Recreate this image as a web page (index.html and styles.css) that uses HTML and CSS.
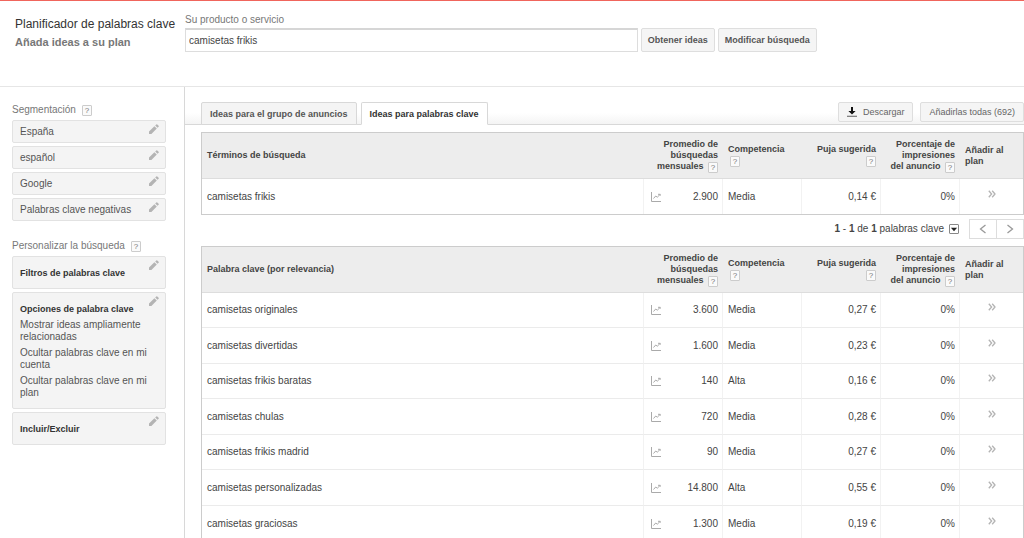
FILE: index.html
```html
<!DOCTYPE html>
<html lang="es">
<head>
<meta charset="utf-8">
<title>Planificador de palabras clave</title>
<link rel="stylesheet" href="styles.css">
</head>
<body>
<svg class="sprite" aria-hidden="true">
  <symbol id="pencil" viewBox="0 0 10 10"><path d="M0 10V7.6L5.4 2.2l2.4 2.4L2.4 10zM6.2 1.5l1.1-1.1q.5-.5 1 0l1.3 1.3q.5.5 0 1L8.5 3.8z"/></symbol>
  <symbol id="chart" viewBox="0 0 10 10"><path d="M.5 0v9.5H10M2.500 6.500L4.700 4l1.600 1.200L9 2.500M7 2.300h2.300v1.400" fill="none" stroke="currentColor"/></symbol>
  <symbol id="chevrons" viewBox="0 0 8 8"><path d="M.8.8L3.6 4 .8 7.2M4.2.8L7 4 4.2 7.2" fill="none" stroke="currentColor" stroke-width="1.3"/></symbol>
</svg>
<header class="top">
  <div class="heading">
    <h1>Planificador de palabras clave</h1>
    <p>Añada ideas a su plan</p>
  </div>
  <form class="search">
    <label for="product">Su producto o servicio</label>
    <div class="search-row">
      <input id="product" type="text" value="camisetas frikis">
      <button class="btn strong" type="button">Obtener ideas</button>
      <button class="btn strong" type="button">Modificar búsqueda</button>
    </div>
  </form>
</header>
<div class="body">
  <aside class="side">
    <h2>Segmentación <button class="help" type="button">?</button></h2>
    <div class="stack">
      <section class="box"><span>España</span><button class="edit" type="button" aria-label="Editar"><svg><use href="#pencil"/></svg></button></section>
      <section class="box"><span>español</span><button class="edit" type="button" aria-label="Editar"><svg><use href="#pencil"/></svg></button></section>
      <section class="box"><span>Google</span><button class="edit" type="button" aria-label="Editar"><svg><use href="#pencil"/></svg></button></section>
      <section class="box"><span>Palabras clave negativas</span><button class="edit" type="button" aria-label="Editar"><svg><use href="#pencil"/></svg></button></section>
    </div>
    <h2>Personalizar la búsqueda <button class="help" type="button">?</button></h2>
    <div class="stack">
      <section class="box tall"><h3>Filtros de palabras clave</h3><button class="edit" type="button" aria-label="Editar"><svg><use href="#pencil"/></svg></button></section>
      <section class="box tall">
        <div>
          <h3>Opciones de palabra clave</h3>
          <ul>
            <li>Mostrar ideas ampliamente relacionadas</li>
            <li>Ocultar palabras clave en mi cuenta</li>
            <li>Ocultar palabras clave en mi plan</li>
          </ul>
        </div>
        <button class="edit" type="button" aria-label="Editar"><svg><use href="#pencil"/></svg></button>
      </section>
      <section class="box tall"><h3>Incluir/Excluir</h3><button class="edit" type="button" aria-label="Editar"><svg><use href="#pencil"/></svg></button></section>
    </div>
  </aside>
  <main class="main">
    <div class="bar">
      <nav class="tabs">
        <button class="tab" type="button">Ideas para el grupo de anuncios</button>
        <button class="tab active" type="button">Ideas para palabras clave</button>
      </nav>
      <div class="actions">
        <button class="btn" type="button"><svg class="download" viewBox="0 0 10 10"><path d="M4 0h2v4h2.600L5 7.600 1.400 4H4z" fill="#111"/><path d="M0 9.300h10" stroke="#777" stroke-width="1.200"/></svg>Descargar</button>
        <button class="btn" type="button">Añadirlas todas (692)</button>
      </div>
    </div>
    <div class="results">
      <table class="grid">
        <thead>
          <tr><th class="term">Términos de búsqueda</th><th class="num icon-col"></th><th class="num vol-col"><div class="wide">Promedio de búsquedas mensuales <button class="help" type="button">?</button></div></th><th class="comp">Competencia <button class="help" type="button">?</button></th><th class="num bid">Puja sugerida <button class="help" type="button">?</button></th><th class="num share">Porcentaje de impresiones del&nbsp;anuncio <button class="help" type="button">?</button></th><th class="add">Añadir al plan</th></tr>
        </thead>
        <tbody>
          <tr><td>camisetas frikis</td><td class="trend"><svg><use href="#chart"/></svg></td><td class="num vol">2.900</td><td>Media</td><td class="num">0,14 €</td><td class="num">0%</td><td class="plus"><button type="button" aria-label="Añadir al plan"><svg><use href="#chevrons"/></svg></button></td></tr>
        </tbody>
      </table>
      <div class="pager">
        <span><b>1</b> - <b>1</b> de <b>1</b> palabras clave</span>
        <button class="drop" type="button" aria-label="Filas por página"><svg viewBox="0 0 9 9"><path d="M1 3h7L4.500 7z"/></svg></button>
        <div class="pages">
          <button type="button" aria-label="Anterior"><svg viewBox="0 0 8 10"><path d="M6.500 1L1.500 5l5 4"/></svg></button>
          <button type="button" aria-label="Siguiente"><svg viewBox="0 0 8 10"><path d="M1.500 1l5 4-5 4"/></svg></button>
        </div>
      </div>
      <table class="grid list">
        <thead>
          <tr><th class="term">Palabra clave (por relevancia)</th><th class="num icon-col"></th><th class="num vol-col"><div class="wide">Promedio de búsquedas mensuales <button class="help" type="button">?</button></div></th><th class="comp">Competencia <button class="help" type="button">?</button></th><th class="num bid">Puja sugerida <button class="help" type="button">?</button></th><th class="num share">Porcentaje de impresiones del&nbsp;anuncio <button class="help" type="button">?</button></th><th class="add">Añadir al plan</th></tr>
        </thead>
        <tbody>
          <tr><td>camisetas originales</td><td class="trend"><svg><use href="#chart"/></svg></td><td class="num vol">3.600</td><td>Media</td><td class="num">0,27 €</td><td class="num">0%</td><td class="plus"><button type="button" aria-label="Añadir al plan"><svg><use href="#chevrons"/></svg></button></td></tr>
          <tr><td>camisetas divertidas</td><td class="trend"><svg><use href="#chart"/></svg></td><td class="num vol">1.600</td><td>Media</td><td class="num">0,23 €</td><td class="num">0%</td><td class="plus"><button type="button" aria-label="Añadir al plan"><svg><use href="#chevrons"/></svg></button></td></tr>
          <tr><td>camisetas frikis baratas</td><td class="trend"><svg><use href="#chart"/></svg></td><td class="num vol">140</td><td>Alta</td><td class="num">0,16 €</td><td class="num">0%</td><td class="plus"><button type="button" aria-label="Añadir al plan"><svg><use href="#chevrons"/></svg></button></td></tr>
          <tr><td>camisetas chulas</td><td class="trend"><svg><use href="#chart"/></svg></td><td class="num vol">720</td><td>Media</td><td class="num">0,28 €</td><td class="num">0%</td><td class="plus"><button type="button" aria-label="Añadir al plan"><svg><use href="#chevrons"/></svg></button></td></tr>
          <tr><td>camisetas frikis madrid</td><td class="trend"><svg><use href="#chart"/></svg></td><td class="num vol">90</td><td>Media</td><td class="num">0,27 €</td><td class="num">0%</td><td class="plus"><button type="button" aria-label="Añadir al plan"><svg><use href="#chevrons"/></svg></button></td></tr>
          <tr><td>camisetas personalizadas</td><td class="trend"><svg><use href="#chart"/></svg></td><td class="num vol">14.800</td><td>Alta</td><td class="num">0,55 €</td><td class="num">0%</td><td class="plus"><button type="button" aria-label="Añadir al plan"><svg><use href="#chevrons"/></svg></button></td></tr>
          <tr><td>camisetas graciosas</td><td class="trend"><svg><use href="#chart"/></svg></td><td class="num vol">1.300</td><td>Media</td><td class="num">0,19 €</td><td class="num">0%</td><td class="plus"><button type="button" aria-label="Añadir al plan"><svg><use href="#chevrons"/></svg></button></td></tr>
        </tbody>
      </table>
    </div>
  </main>
</div>
</body>
</html>
```
FILE: styles.css
```css
* { box-sizing: border-box; }
body {
  margin: 0;
  min-height: 100vh;
  display: flex;
  flex-direction: column;
  border-top: 1px solid #f0655c;
  background: #fff;
  color: #444;
  font: 10px/12px "Liberation Sans", Arial, sans-serif;
}
h1, h2, h3, p, ul { margin: 0; padding: 0; font: inherit; }
ul { list-style: none; }
button { font: inherit; color: inherit; cursor: pointer; }
svg { display: block; fill: currentColor; }
.sprite { position: absolute; width: 0; height: 0; }

.top {
  display: flex;
  height: 86px;
  padding: 12px 16px 0 15px;
  border-bottom: 1px solid #e6e6e6;
}
.heading { width: 170px; flex: none; }
.heading h1 { color: #333; font-size: 12px; line-height: 22px; white-space: nowrap; }
.heading p { color: #777; font-size: 11px; line-height: 14px; font-weight: bold; }
.search label { display: block; color: #777; line-height: 14px; }
.search { flex: 1; }
.search-row { display: flex; gap: 3px; padding-top: 1px; }
.search-row input {
  width: 55%;
  height: 24px;
  padding: 0 3px;
  border: 1px solid #ddd;
  border-top: 2px solid #d6d6d6;
  color: #444;
  font: inherit;
}
.btn {
  display: flex;
  align-items: center;
  padding: 0 8px;
  border: 1px solid #dedede;
  border-radius: 2px;
  background: #f5f5f5;
  color: #666;
  font-size: 9px;
  white-space: nowrap;
}
.btn.strong { height: 24px; padding: 0 6px; color: #555; font-weight: bold; }

.body { display: flex; flex: 1; }
.side {
  width: 185px;
  flex: none;
  padding: 16px 18px 0 12px;
  border-right: 1px solid #d8d8d8;
}
.side h2 { display: flex; align-items: center; gap: 6px; height: 14px; color: #777; }
.stack { display: grid; gap: 3px; padding: 3px 0 18px; }
.box {
  display: flex;
  justify-content: space-between;
  align-items: flex-start;
  padding: 5px 6px 4px 7px;
  border: 1px solid #e2e2e2;
  border-radius: 2px;
  background: #f4f4f4;
  color: #555;
}
.box.tall { padding: 10px 6px 9px 7px; }
.box > :first-child { flex: 1; }
.box h3 { color: #333; font-weight: bold; font-size: 9px; white-space: nowrap; }
.box li { margin-top: 4px; margin-right: -12px; }
.edit { padding: 0; border: 0; background: none; color: #b4b4b4; }
.box .edit { margin-top: -2px; }
.box.tall .edit { margin-top: -7px; }
.edit svg { width: 10px; height: 10px; }
.help {
  display: inline-block;
  width: 10px;
  height: 11px;
  padding: 0;
  border: 1px solid #ccc;
  border-radius: 1px;
  background: #fafafa;
  color: #777;
  font: 8px/9px "Liberation Sans", Arial, sans-serif;
}

.main { flex: 1; min-width: 0; }
.bar {
  display: flex;
  justify-content: space-between;
  align-items: flex-end;
  height: 38px;
  padding-left: 16px;
  border-bottom: 1px solid #d8d8d8;
  background: linear-gradient(#fff 70%, #f4f4f4);
}
.tabs { display: flex; gap: 4px; margin-bottom: -1px; }
.tab {
  height: 23px;
  padding: 0 8px;
  border: 1px solid #d8d8d8;
  border-radius: 2px 2px 0 0;
  background: #f4f4f4;
  color: #555;
  font-size: 9px;
  font-weight: bold;
  white-space: nowrap;
}
.tab.active { border-bottom-color: #fff; background: #fff; color: #333; }
.actions { display: flex; gap: 7px; padding-bottom: 2px; }
.actions .btn { height: 20px; }
.download { width: 10px; height: 10px; margin-right: 6px; }

.results { padding: 7px 0 0 16px; }
.grid {
  width: 100%;
  border: 1px solid #ccc;
  border-spacing: 0;
  table-layout: fixed;
}
.list { border-bottom: 0; }
th {
  height: 46px;
  padding: 0 5px;
  border-bottom: 1px solid #ddd;
  background: #ededed;
  color: #444;
  font-size: 9px;
  line-height: 11px;
  text-align: left;
}
th .help { margin: 1px 0 0 2px; vertical-align: top; }
.icon-col { width: 23px; }
.vol-col { width: 56px; }
.wide { margin-left: -23px; }
.comp, .bid, .share { width: 79px; }
.share { padding-left: 0; }
.add { width: 63px; }
td { height: 35px; padding: 0 5px; border-right: 1px solid #f2f2f2; border-bottom: 1px solid #ebebeb; }
.list td { height: 36px; }
.list tr:nth-child(odd) td { height: 35px; }
td:last-child { border-right: 0; }
.grid tr:last-child td { border-bottom: 0; }
.num { text-align: right; }
td.num { padding: 0 4px; }
td.trend { padding: 0 7px; border-right: 0; }
.trend svg { width: 10px; height: 10px; color: #aaa; }
td.plus { padding-bottom: 6px; }
.plus button { display: block; margin: 0 auto; padding: 0; border: 0; background: none; color: #b4b4b4; }
.plus svg { width: 8px; height: 8px; }

.pager { display: flex; justify-content: flex-end; align-items: center; height: 31px; padding-bottom: 3px; }
.drop { width: 10px; height: 10px; margin: 0 10px 0 5px; padding: 0; border: 1px solid #888; border-radius: 1px; background: #fff; color: #222; }
.pages { display: flex; }
.pages button { display: grid; place-items: center; width: 28px; height: 20px; padding: 0; border: 1px solid #ddd; background: #fff; }
.pages button + button { margin-left: -1px; }
.pages svg { width: 8px; height: 10px; fill: none; stroke: #999; stroke-width: 1.3; }
```
